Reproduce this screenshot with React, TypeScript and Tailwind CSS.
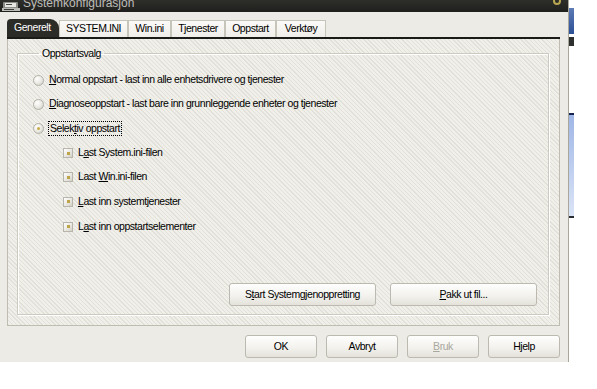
import React from "react";

const font = "font-['Liberation_Sans',Arial,sans-serif]";

const Radio = ({ checked }: { checked?: boolean }) => (
  <span className="w-[11px] h-[11px] rounded-full border border-[#b3b1a7] bg-[radial-gradient(circle_at_35%_30%,#ffffff_0%,#e9e8e2_55%,#c9c7bd_100%)] flex items-center justify-center shrink-0">
    {checked && <span className="w-[3px] h-[3px] rounded-full bg-[#c8ad4a]" />}
  </span>
);

const Check = () => (
  <span className="w-[10px] h-[10px] border border-[#b8b6ac] bg-[linear-gradient(135deg,#ffffff_0%,#e6e5df_60%,#d2d0c7_100%)] flex items-center justify-center shrink-0">
    <span className="w-[3px] h-[3px] bg-[#bda548]" />
  </span>
);

const U = ({ children }: { children: React.ReactNode }) => (
  <span className="underline underline-offset-[1px]">{children}</span>
);

const Button = ({
  children,
  w,
  disabled,
}: {
  children: React.ReactNode;
  w: string;
  disabled?: boolean;
}) => (
  <button
    className={`${w} h-[23px] rounded-[3px] border border-[#bcbab0] bg-[linear-gradient(180deg,#fefefd_0%,#f3f2ee_55%,#e4e2da_100%)] ${
      disabled ? "text-[#a9a79d]" : "text-black"
    } flex items-center justify-center`}
  >
    {children}
  </button>
);

const tabs = ["SYSTEM.INI", "Win.ini", "Tjenester", "Oppstart", "Verktøy"];
const tabWidths = ["w-[69px]", "w-[43px]", "w-[54px]", "w-[51px]", "w-[50px]"];

export default function App() {
  return (
    <div className={`w-[597px] h-[389px] bg-white flex items-start text-[10.5px] tracking-[-0.45px] ${font}`}>
      {/* dialog window */}
      <div className="w-[569px] h-[362px] bg-[#ecebe5] border-r border-[#a9a79c] flex flex-col">
        {/* title bar, cut off at the top of the shot */}
        <div className="h-[12px] bg-[linear-gradient(180deg,#2e2e2b_0%,#1f1f1d_100%)] flex items-end overflow-hidden relative">
          <svg width="18" height="11" viewBox="0 0 18 11" className="ml-[2px] shrink-0">
            <rect x="1" y="1" width="15" height="8" rx="1" fill="#8c8c88" />
            <rect x="3" y="2" width="11" height="4" fill="#e6e6e2" />
            <rect x="4" y="3" width="6" height="1" fill="#444" />
            <rect x="0" y="7" width="18" height="3" fill="#bdbdb8" />
            <rect x="2" y="8" width="10" height="1" fill="#3a3a38" />
          </svg>
          <span className="ml-[3px] text-[12px] leading-[14px] tracking-normal text-[#bebdb8] translate-y-[-2px]">
            Systemkonfigurasjon
          </span>
          <span className="absolute left-[553px] top-[-3px] w-[8px] h-[8px] rounded-full border-2 border-[#b9a650]" />
        </div>

        <div className="flex-1 flex flex-col pl-[7px] pr-[8px] pt-[7px]">
          {/* tabs */}
          <div className="h-[18px] flex items-end">
            <div className="w-[52px] h-[19px] mb-[-1px] bg-[#2b2b28] rounded-tl-[4px] rounded-tr-[9px] text-white flex items-center pl-[7px] pb-[1px]">
              Generelt
            </div>
            {tabs.map((t, i) => (
              <div
                key={t}
                className={`${tabWidths[i]} h-[17px] bg-[linear-gradient(180deg,#fbfaf8_0%,#efeee9_100%)] border-t border-l border-r border-[#c7c4ba] text-black flex items-center justify-center`}
              >
                {t}
              </div>
            ))}
          </div>
          <div className="h-[2px] bg-[#1a1a18] w-[553px]" />

          {/* tab panel */}
          <div className="w-[553px] h-[287px] border-l border-r border-b border-[#bfbcb1] bg-[repeating-linear-gradient(45deg,#e2e1d9_0px,#e2e1d9_1px,#f0efea_1px,#f0efea_3px)] pl-[9px] pr-[10px] pt-[8px] pb-[10px] flex flex-col">
            <fieldset className="flex-1 border border-[#cdcac0] shadow-[inset_1px_1px_0_#ffffff,1px_1px_0_#ffffff] pl-[15px] pr-[11px] text-black">
              <legend className="ml-[6px] px-[3px] leading-[13px]">Oppstartsvalg</legend>

              <div className="flex flex-col gap-[8px] pt-[12px]">
                <label className="h-[16px] flex items-center gap-[5px]">
                  <Radio />
                  <span>
                    <U>N</U>ormal oppstart - last inn alle enhetsdrivere og tjenester
                  </span>
                </label>
                <label className="h-[16px] flex items-center gap-[5px]">
                  <Radio />
                  <span>
                    <U>D</U>iagnoseoppstart - last bare inn grunnleggende enheter og tjenester
                  </span>
                </label>
                <label className="h-[16px] flex items-center gap-[4px]">
                  <Radio checked />
                  <span className="border border-dotted border-black px-[1px] leading-[13px]">
                    Selek<U>t</U>iv oppstart
                  </span>
                </label>
              </div>

              <div className="flex flex-col gap-[8px] pt-[9px] pl-[30px]">
                <label className="h-[16px] flex items-center gap-[5px]">
                  <Check />
                  <span>
                    L<U>a</U>st System.ini-filen
                  </span>
                </label>
                <label className="h-[16px] flex items-center gap-[5px]">
                  <Check />
                  <span>
                    Last <U>W</U>in.ini-filen
                  </span>
                </label>
                <label className="h-[17px] flex items-center gap-[5px]">
                  <Check />
                  <span>
                    <U>L</U>ast inn systemtjenester
                  </span>
                </label>
                <label className="h-[17px] flex items-center gap-[5px]">
                  <Check />
                  <span>
                    L<U>a</U>st inn oppstartselementer
                  </span>
                </label>
              </div>

              <div className="mt-[48px] flex justify-end gap-[14px]">
                <Button w="w-[147px]">
                  S<U>t</U>art Systemgjenoppretting
                </Button>
                <Button w="w-[147px]">
                  <U>P</U>akk ut fil...
                </Button>
              </div>
            </fieldset>
          </div>

          {/* dialog buttons */}
          <div className="mt-[9px] flex justify-end gap-[9px]">
            <Button w="w-[72px]">OK</Button>
            <Button w="w-[72px]">Avbryt</Button>
            <Button w="w-[72px]" disabled>
              <U>B</U>ruk
            </Button>
            <Button w="w-[72px]">Hjelp</Button>
          </div>
        </div>
      </div>

      {/* sliver of another window behind */}
      <div className="w-[5px] h-[230px] flex flex-col">
        <div className="h-[8px] bg-white" />
        <div className="h-[26px] bg-[linear-gradient(180deg,#5d7bb5_0%,#2c4f96_100%)]" />
        <div className="h-[3px] bg-white" />
        <div className="h-[9px] bg-[#2e302f]" />
        <div className="h-[67px] bg-white" />
        <div className="h-[2px] bg-[#15244f]" />
        <div className="h-[101px] bg-[linear-gradient(180deg,#9fb6e6_0%,#dbe4f7_100%)]" />
        <div className="h-[2px] bg-[#2a2c33]" />
      </div>
    </div>
  );
}
